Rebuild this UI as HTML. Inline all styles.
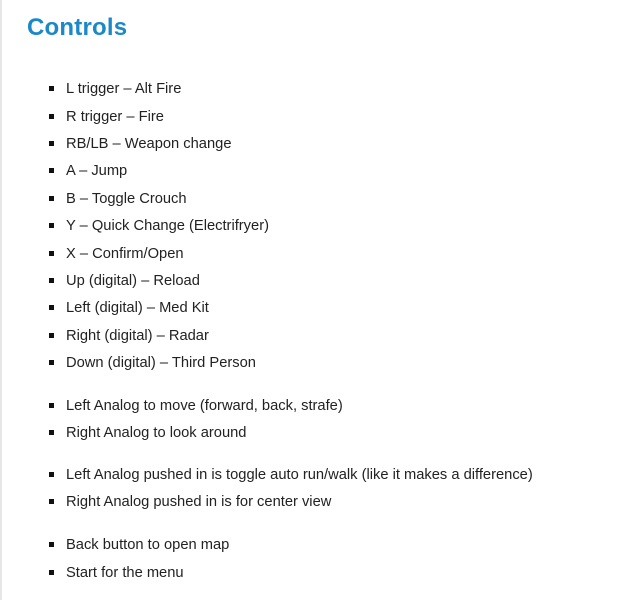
<!DOCTYPE html>
<html><head><style>
body{margin:0;width:620px;height:600px;background:#fff;position:relative;overflow:hidden;font-family:"Liberation Sans",sans-serif;}
.bl{position:absolute;left:0;top:0;width:2px;height:600px;background:#e6e6e6;}
h1{position:absolute;left:27px;top:14px;margin:0;font-size:24px;font-weight:bold;color:#1a88c9;letter-spacing:0.2px;}
.r{position:absolute;left:66px;font-size:14.7px;color:#222;line-height:18px;white-space:nowrap;}
.r:before{content:"";position:absolute;left:-17px;top:6px;width:5px;height:5px;background:#111;}
</style></head><body>
<div class="bl"></div>
<h1>Controls</h1>
<div class="r" style="top:80px">L trigger – Alt Fire</div>
<div class="r" style="top:108px">R trigger – Fire</div>
<div class="r" style="top:135px">RB/LB – Weapon change</div>
<div class="r" style="top:162px">A – Jump</div>
<div class="r" style="top:190px">B – Toggle Crouch</div>
<div class="r" style="top:217px">Y – Quick Change (Electrifryer)</div>
<div class="r" style="top:245px">X – Confirm/Open</div>
<div class="r" style="top:272px">Up (digital) – Reload</div>
<div class="r" style="top:299px">Left (digital) – Med Kit</div>
<div class="r" style="top:327px">Right (digital) – Radar</div>
<div class="r" style="top:354px">Down (digital) – Third Person</div>
<div class="r" style="top:397px">Left Analog to move (forward, back, strafe)</div>
<div class="r" style="top:424px">Right Analog to look around</div>
<div class="r" style="top:466px">Left Analog pushed in is toggle auto run/walk (like it makes a difference)</div>
<div class="r" style="top:493px">Right Analog pushed in is for center view</div>
<div class="r" style="top:536px">Back button to open map</div>
<div class="r" style="top:564px">Start for the menu</div>
</body></html>
